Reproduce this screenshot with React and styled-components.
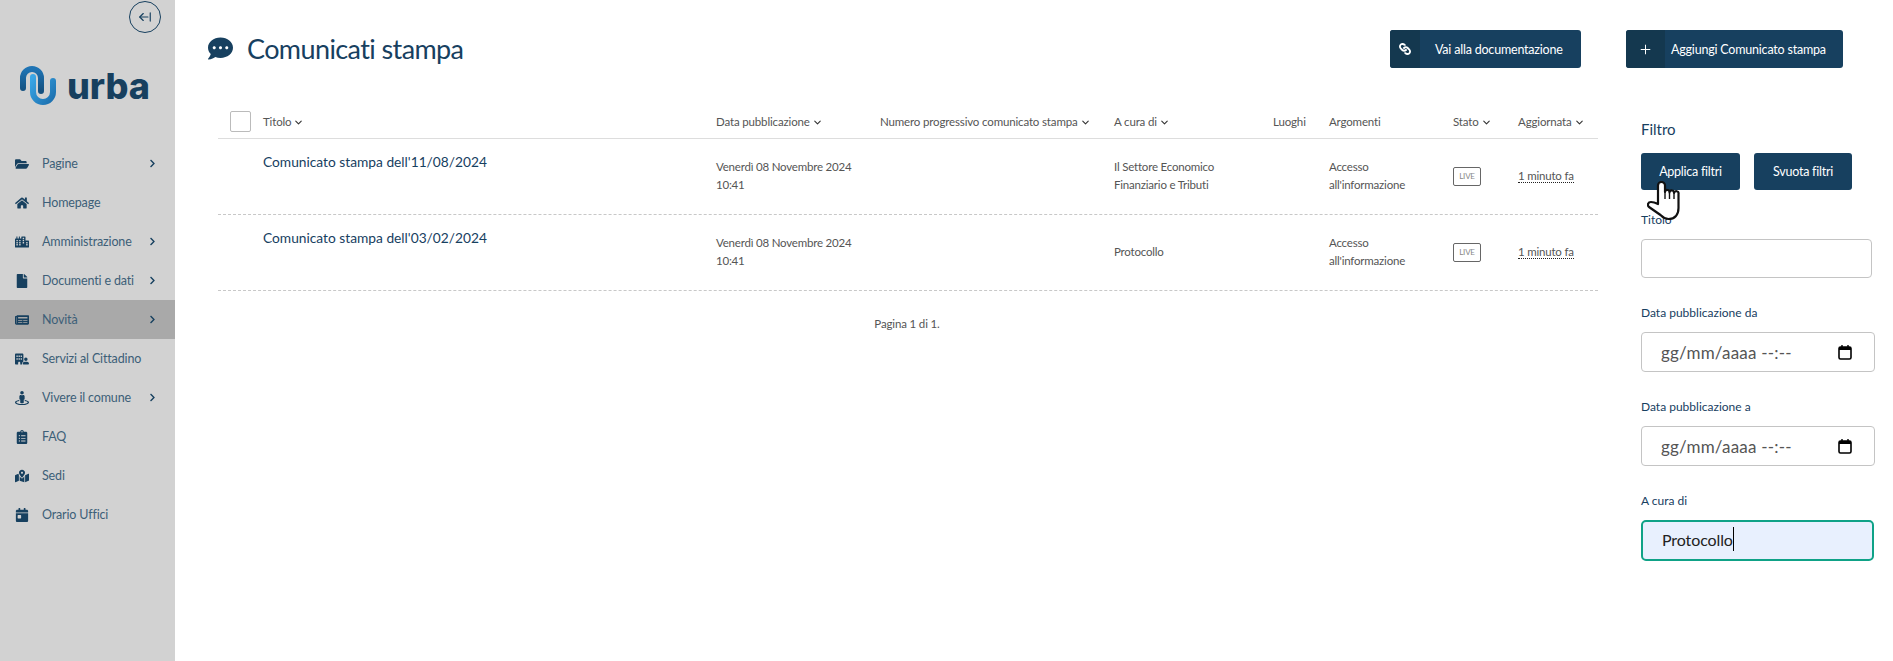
import React from 'react';
import styled, { createGlobalStyle } from 'styled-components';
import {
  FaFolderOpen, FaHome, FaCity, FaFile, FaNewspaper, FaStreetView,
  FaClipboardList, FaMapMarkedAlt, FaCalendarDay, FaCommentDots, FaLink, FaChevronRight,
} from 'react-icons/fa';
import { FaBuildingUser } from 'react-icons/fa6';
import { ArrowLeftFromLine, ChevronDown, Plus } from 'lucide-react';

const navy = '#17405f';

const GlobalStyle = createGlobalStyle`
  html, body { margin: 0; padding: 0; background: #fff; }
  body { font-family: Lato, "Open Sans", sans-serif; color: #4a4a4a; }
  * { box-sizing: border-box; }
`;

const navItems = [
  { label: 'Pagine', icon: FaFolderOpen, sub: true },
  { label: 'Homepage', icon: FaHome },
  { label: 'Amministrazione', icon: FaCity, sub: true },
  { label: 'Documenti e dati', icon: FaFile, sub: true },
  { label: 'Novità', icon: FaNewspaper, sub: true, active: true },
  { label: 'Servizi al Cittadino', icon: FaBuildingUser },
  { label: 'Vivere il comune', icon: FaStreetView, sub: true },
  { label: 'FAQ', icon: FaClipboardList },
  { label: 'Sedi', icon: FaMapMarkedAlt },
  { label: 'Orario Uffici', icon: FaCalendarDay },
];

const columns = [
  { label: 'Titolo', sort: true },
  { label: 'Data pubblicazione', sort: true },
  { label: 'Numero progressivo comunicato stampa', sort: true },
  { label: 'A cura di', sort: true },
  { label: 'Luoghi' },
  { label: 'Argomenti' },
  { label: 'Stato', sort: true },
  { label: 'Aggiornata', sort: true },
];

const rows = [
  { title: "Comunicato stampa dell'11/08/2024", by: ['Il Settore Economico', 'Finanziario e Tributi'] },
  { title: "Comunicato stampa dell'03/02/2024", by: ['Protocollo'] },
];

const Logo = () => (
  <LogoWrap>
    <svg width="40" height="40" viewBox="0 0 40 40" fill="none">
      <defs>
        <linearGradient id="archGrad" x1="0" y1="0" x2="0" y2="1">
          <stop offset="0" stopColor="#1f74b4" />
          <stop offset="1" stopColor="#14507f" />
        </linearGradient>
        <linearGradient id="cupGrad" x1="0" y1="0" x2="1" y2="1">
          <stop offset="0" stopColor="#3aa6e6" />
          <stop offset="1" stopColor="#1c6fae" />
        </linearGradient>
      </defs>
      <path d="M5 22V12a9 9 0 0 1 18 0v13" stroke="url(#archGrad)" strokeWidth="6" strokeLinecap="round" />
      <path d="M15 11v15a10 10 0 0 0 20 0V15" stroke="url(#cupGrad)" strokeWidth="6" strokeLinecap="round" />
    </svg>
    <LogoText>urba</LogoText>
  </LogoWrap>
);

const HandCursor = () => (
  <CursorWrap>
    <svg width="34" height="40" viewBox="0 0 34 40">
      <path
        d="M11 23V4.5a3.5 3.5 0 0 1 7 0V11a2.2 2.2 0 0 1 4.5.5a2.2 2.2 0 0 1 4.5.5a2.2 2.2 0 0 1 4.5 1V27c0 7-4 11-10 11c-4 0-6-2-8-4L2 26c-2-2-1-5 2-5c2 0 5 1 7 2z"
        fill="#fff"
        stroke="#111"
        strokeWidth="2.2"
        strokeLinejoin="round"
      />
      <path d="M18 11v7M22.5 12v6M27 12.5V18" stroke="#111" strokeWidth="1.4" fill="none" />
    </svg>
  </CursorWrap>
);

const DateInput = () => (
  <DateField>
    <DateText>gg/mm/aaaa --:--</DateText>
    <svg width="14" height="15" viewBox="0 0 14 15" fill="none">
      <rect x="1" y="2" width="12" height="12" rx="1.5" stroke="#000" strokeWidth="1.6" />
      <rect x="1" y="2" width="12" height="3" fill="#000" />
      <path d="M4 0v2M10 0v2" stroke="#000" strokeWidth="1.4" />
    </svg>
  </DateField>
);

export default function App() {
  return (
    <Page>
      <GlobalStyle />
      <Sidebar>
        <ToggleRow>
          <Toggle><ArrowLeftFromLine size={14} strokeWidth={2} /></Toggle>
        </ToggleRow>
        <Logo />
        <Nav>
          {navItems.map(({ label, icon: Icon, sub, active }) => (
            <NavItem key={label} $active={active}>
              <NavIcon><Icon size={14} /></NavIcon>
              <NavLabel>{label}</NavLabel>
              {sub && <NavChevron><FaChevronRight size={9} /></NavChevron>}
            </NavItem>
          ))}
        </Nav>
      </Sidebar>

      <Main>
        <TopBar>
          <TitleWrap>
            <FaCommentDots size={25} color={navy} />
            <Title>Comunicati stampa</Title>
          </TitleWrap>
          <DocButton>
            <ButtonIcon $w={30}><LinkIcon size={12} /></ButtonIcon>
            <ButtonText $w={161} $pad={15}>Vai alla documentazione</ButtonText>
          </DocButton>
          <AddButton>
            <ButtonIcon $w={39}><Plus size={15} strokeWidth={1.6} /></ButtonIcon>
            <ButtonText $w={178} $pad={6}>Aggiungi Comunicato stampa</ButtonText>
          </AddButton>
        </TopBar>

        <Content>
          <TableArea>
            <HeadRow>
              <CheckCell><Checkbox /></CheckCell>
              {columns.map((c) => (
                <HeadCell key={c.label}>
                  {c.label}
                  {c.sort && <SortIcon size={11} strokeWidth={2.4} />}
                </HeadCell>
              ))}
            </HeadRow>
            {rows.map((r) => (
              <BodyRow key={r.title}>
                <div />
                <TitleCell>{r.title}</TitleCell>
                <TextCell>Venerdì 08 Novembre 2024<br />10:41</TextCell>
                <div />
                <TextCell>{r.by.map((line) => <div key={line}>{line}</div>)}</TextCell>
                <div />
                <TextCell>Accesso<br />all'informazione</TextCell>
                <TextCell><LiveBadge>LIVE</LiveBadge></TextCell>
                <TextCell><Ago>1 minuto fa</Ago></TextCell>
              </BodyRow>
            ))}
            <Pager>Pagina 1 di 1.</Pager>
          </TableArea>

          <Filters>
            <FilterTitle>Filtro</FilterTitle>
            <FilterButtons>
              <FilterButton $w={99}>Applica filtri</FilterButton>
              <FilterButton $w={98}>Svuota filtri</FilterButton>
              <HandCursor />
            </FilterButtons>
            <FieldLabel $top={23}>Titolo</FieldLabel>
            <TextField />
            <FieldLabel $top={28}>Data pubblicazione da</FieldLabel>
            <DateInput />
            <FieldLabel $top={28}>Data pubblicazione a</FieldLabel>
            <DateInput />
            <FieldLabel $top={28}>A cura di</FieldLabel>
            <FocusField>Protocollo<Caret /></FocusField>
          </Filters>
        </Content>
      </Main>
    </Page>
  );
}

const Page = styled.div`
  display: flex;
  width: 1893px;
  height: 661px;
  overflow: hidden;
`;

const Sidebar = styled.aside`
  flex: 0 0 175px;
  background: #d2d2d2;
`;

const ToggleRow = styled.div`
  display: flex;
  justify-content: flex-end;
  padding: 1px 14px 0 0;
`;

const Toggle = styled.div`
  width: 32px;
  height: 32px;
  border: 1px solid ${navy};
  border-radius: 50%;
  color: ${navy};
  display: flex;
  align-items: center;
  justify-content: center;
`;

const LogoWrap = styled.div`
  display: flex;
  align-items: center;
  gap: 9px;
  height: 40px;
  margin: 33px 0 0 18px;
`;

const LogoText = styled.span`
  font-family: Inter, "Open Sans", sans-serif;
  font-size: 36px;
  font-weight: 800;
  color: ${navy};
  line-height: 40px;
`;

const Nav = styled.nav`
  margin-top: 38px;
`;

const NavItem = styled.div`
  height: 39px;
  display: flex;
  align-items: center;
  padding-left: 15px;
  background: ${(p) => (p.$active ? '#a9a9a9' : 'transparent')};
  color: ${navy};
`;

const NavIcon = styled.span`
  width: 14px;
  display: flex;
  justify-content: center;
  margin-right: 13px;
`;

const NavLabel = styled.span`
  font-size: 12.5px;
  font-weight: 400;
  letter-spacing: -0.15px;
  width: 106px;
  white-space: nowrap;
  color: #3d5f78;
`;

const NavChevron = styled.span`
  display: flex;
`;

const Main = styled.main`
  flex: 1;
  padding-top: 30px;
`;

const TopBar = styled.div`
  display: flex;
  align-items: center;
  height: 38px;
`;

const TitleWrap = styled.div`
  display: flex;
  align-items: center;
  gap: 14px;
  margin-left: 33px;
  width: 1182px;
  position: relative;
  top: -1px;
`;

const Title = styled.h1`
  margin: 0;
  font-size: 27px;
  font-weight: 400;
  letter-spacing: -0.6px;
  color: ${navy};
  white-space: nowrap;
`;

const ActionButton = styled.div`
  display: flex;
  height: 38px;
  border-radius: 3px;
  overflow: hidden;
  background: ${navy};
  color: #fff;
  font-size: 12.5px;
  letter-spacing: -0.2px;
`;

const DocButton = styled(ActionButton)`
  margin-right: 45px;
`;

const AddButton = styled(ActionButton)``;

const ButtonIcon = styled.span`
  width: ${(p) => p.$w}px;
  background: #14384f;
  display: flex;
  align-items: center;
  justify-content: center;
`;

const LinkIcon = styled(FaLink)`
  transform: rotate(90deg);
`;

const ButtonText = styled.span`
  width: ${(p) => p.$w}px;
  padding-left: ${(p) => p.$pad}px;
  display: flex;
  align-items: center;
  white-space: nowrap;
`;

const Content = styled.div`
  display: flex;
  margin-top: 32px;
`;

const TableArea = styled.div`
  width: 1380px;
  margin-left: 43px;
`;

const grid = '45px 453px 164px 234px 159px 56px 124px 65px 80px';

const HeadRow = styled.div`
  display: grid;
  grid-template-columns: ${grid};
  align-items: center;
  height: 39px;
  padding-top: 4px;
  border-bottom: 1px solid #ddd;
`;

const CheckCell = styled.div`
  padding-left: 12px;
`;

const Checkbox = styled.div`
  width: 21px;
  height: 21px;
  background: #fff;
  border: 1px solid #bbb;
  border-radius: 2px;
`;

const HeadCell = styled.div`
  display: flex;
  align-items: center;
  gap: 2px;
  font-size: 11.5px;
  font-weight: 400;
  letter-spacing: -0.15px;
  white-space: nowrap;
  color: #555;
`;

const SortIcon = styled(ChevronDown)`
  margin-top: 2px;
  color: #333;
`;

const BodyRow = styled.div`
  display: grid;
  grid-template-columns: ${grid};
  align-items: center;
  height: 76px;
  border-bottom: 1px dashed #c8c8c8;
`;

const TitleCell = styled.div`
  align-self: start;
  padding-top: 14px;
  font-size: 13.75px;
  color: ${navy};
  white-space: nowrap;
`;

const TextCell = styled.div`
  font-size: 11.5px;
  font-weight: 400;
  letter-spacing: -0.2px;
  line-height: 18px;
  padding-bottom: 1px;
  white-space: nowrap;
  color: #555;
`;

const LiveBadge = styled.span`
  display: inline-flex;
  align-items: center;
  justify-content: center;
  width: 28px;
  height: 19px;
  border: 1px solid #666;
  border-radius: 2px;
  font-size: 8px;
  color: #888;
`;

const Ago = styled.span`
  border-bottom: 1px dotted #222;
`;

const Pager = styled.div`
  margin-top: 26px;
  text-align: center;
  font-size: 11.5px;
  font-weight: 400;
  letter-spacing: -0.15px;
  color: #555;
  padding-right: 2px;
`;

const Filters = styled.section`
  width: 235px;
  margin: 0 0 0 43px;
  padding-top: 20px;
`;

const FilterTitle = styled.h2`
  margin: 0;
  font-size: 15px;
  line-height: 18px;
  font-weight: 400;
  color: ${navy};
`;

const FilterButtons = styled.div`
  position: relative;
  display: flex;
  gap: 14px;
  margin-top: 15px;
`;

const FilterButton = styled.div`
  width: ${(p) => p.$w}px;
  height: 37px;
  border-radius: 3px;
  background: ${navy};
  color: #fff;
  font-size: 12.5px;
  letter-spacing: -0.25px;
  display: flex;
  align-items: center;
  justify-content: center;
`;

const CursorWrap = styled.div`
  position: absolute;
  left: 6px;
  top: 28px;
`;

const FieldLabel = styled.label`
  display: block;
  margin-top: ${(p) => p.$top}px;
  font-size: 12px;
  line-height: 14px;
  font-weight: 400;
  color: ${navy};
  margin-bottom: 12px;
`;

const TextField = styled.div`
  width: 231px;
  height: 39px;
  background: #fff;
  border: 1px solid #c4c4c4;
  border-radius: 4px;
`;

const DateField = styled.div`
  width: 234px;
  height: 40px;
  background: #fff;
  border: 1px solid #c4c4c4;
  border-radius: 4px;
  display: flex;
  align-items: center;
  justify-content: space-between;
  padding: 0 22px 0 19px;
`;

const DateText = styled.span`
  font-size: 17px;
  font-weight: 400;
  letter-spacing: 0.2px;
  color: #555;
`;

const FocusField = styled.div`
  width: 233px;
  height: 41px;
  background: #e8f0fe;
  border: 2px solid #0fa287;
  border-radius: 5px;
  display: flex;
  align-items: center;
  padding: 0 0 3px 19px;
  font-size: 16px;
  font-weight: 400;
  letter-spacing: -0.1px;
  color: #222;
`;

const Caret = styled.span`
  display: inline-block;
  width: 1px;
  height: 24px;
  background: #000;
`;
